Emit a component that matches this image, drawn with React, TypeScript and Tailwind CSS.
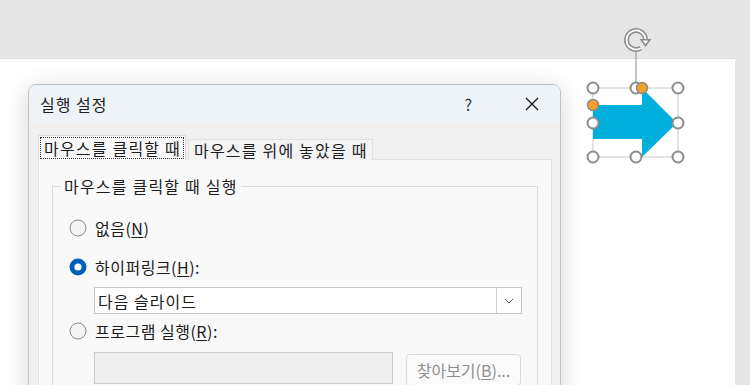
import React from "react";

const font = { fontFamily: '"Noto Sans CJK KR", "Noto Sans", sans-serif' };

function Radio({ checked }: { checked?: boolean }) {
  return (
    <svg width="18" height="18" viewBox="0 0 18 18" className="shrink-0">
      {checked ? (
        <>
          <circle cx="9" cy="9" r="8.5" fill="#005fb8" />
          <circle cx="9" cy="9" r="3.6" fill="#ffffff" />
        </>
      ) : (
        <circle cx="9" cy="9" r="8" fill="#f5f5f5" stroke="#8a8a8a" strokeWidth="1" />
      )}
    </svg>
  );
}

function Shape() {
  const handles: [number, number][] = [
    [13, 58], [56, 58], [98, 58], [13, 93], [98, 93], [13, 127], [56, 127], [98, 127],
  ];
  const arc = "M60.75 18.2 A9.5 9.5 0 1 1 65.5 10";
  return (
    <svg width="110" height="140" viewBox="0 0 110 140" className="absolute left-[580px] top-[30px] overflow-visible">
      <line x1="56" y1="22" x2="56" y2="58" stroke="#8c8c8c" strokeWidth="1" />
      <rect x="13" y="58" width="85" height="69" fill="none" stroke="#c8c8c8" strokeWidth="1" />
      <polygon points="13,75 62,75 62,58 97,93 62,127 62,109 13,109" fill="#00afdb" />
      <path d={arc} fill="none" stroke="#8c8c8c" strokeWidth="5" />
      <path d={arc} fill="none" stroke="#ffffff" strokeWidth="1.8" />
      <polygon points="59.5,9 71.5,9 65.5,17" fill="#8c8c8c" />
      <polygon points="62.5,10.5 68.5,10.5 65.5,14" fill="#ffffff" />
      {handles.map(([x, y], i) => (
        <circle key={i} cx={x} cy={y} r="5.5" fill="#ffffff" stroke="#8c8c8c" strokeWidth="2" />
      ))}
      <circle cx="62" cy="58" r="5.5" fill="#f2a027" stroke="#8c8c8c" strokeWidth="1.5" />
      <circle cx="13" cy="75" r="5.5" fill="#f2a027" stroke="#8c8c8c" strokeWidth="1.5" />
    </svg>
  );
}

export default function App() {
  return (
    <div className="relative w-[750px] h-[385px] overflow-hidden bg-[#e6e6e6]" style={font}>
      <div className="absolute left-0 top-[58px] w-[735px] h-[327px] bg-white border-t border-[#dedede]" />
      <Shape />
      <div className="absolute left-[28px] top-[84px] w-[533px] h-[320px] rounded-t-[8px] border border-[#c2c2c2] bg-[#f0f0f0] shadow-[0_4px_24px_rgba(0,0,0,0.16)] overflow-hidden text-[#1b1b1b]">
        <div className="h-[37px] bg-[#eef3f7] flex items-center pl-[11px] pr-[13px]">
          <span className="text-[16px] leading-none tracking-[1px]">실행 설정</span>
          <span className="ml-auto mr-[52px] text-[16px] leading-none text-[#333]">?</span>
          <svg width="16" height="16" viewBox="0 0 16 16" className="mr-[7px]">
            <path d="M2 2 L14 14 M14 2 L2 14" stroke="#1b1b1b" strokeWidth="1.3" />
          </svg>
        </div>
        <div className="pl-[9px] pr-[8px] pt-[13px]">
          <div className="flex items-end text-[16px] leading-none tracking-[1.2px] relative z-10 -mb-px">
            <div className="w-[148px] h-[25px] bg-[#f9f9f9] border border-b-0 border-[#dcdcdc] px-[1px] pt-[1px]">
              <div className="h-[22px] border border-dotted border-[#333] flex items-center pl-[3px] whitespace-nowrap">
                마우스를 클릭할 때
              </div>
            </div>
            <div className="ml-[2px] w-[185px] h-[21px] bg-[#f3f3f3] border border-b-0 border-[#e0e0e0] flex items-center pl-[5px] whitespace-nowrap">
              마우스를 위에 놓았을 때
            </div>
          </div>
          <div className="w-[514px] h-[240px] bg-[#f9f9f9] border border-[#e2e2e2] px-[13px] pt-[26px]">
            <div className="relative h-[220px] border border-[#dcdcdc] border-b-0 pt-[31px] pl-[16px] text-[16px] leading-none tracking-[0.5px]">
              <div className="absolute left-[8px] top-[-9px] bg-[#f9f9f9] px-[3px] leading-[17px] tracking-[1.2px] whitespace-nowrap">
                마우스를 클릭할 때 실행
              </div>
              <div className="h-[20px] flex items-center gap-[8px]">
                <Radio />
                <span>
                  없음(<span className="underline underline-offset-2">N</span>)
                </span>
              </div>
              <div className="mt-[19px] h-[20px] flex items-center gap-[8px]">
                <Radio checked />
                <span>
                  하이퍼링크(<span className="underline underline-offset-2">H</span>):
                </span>
              </div>
              <div className="mt-[10px] ml-[25px] w-[428px] h-[27px] bg-white border border-[#c8c8c8] flex items-center">
                <span className="pl-[3px] tracking-[1px]">다음 슬라이드</span>
                <div className="ml-auto h-full w-[25px] border-l border-[#cfcfcf] flex items-center justify-center">
                  <svg width="10" height="6" viewBox="0 0 10 6">
                    <path d="M1 1 L5 5 L9 1" fill="none" stroke="#555" strokeWidth="1" />
                  </svg>
                </div>
              </div>
              <div className="mt-[7px] h-[20px] flex items-center gap-[8px]">
                <Radio />
                <span>
                  프로그램 실행(<span className="underline underline-offset-2">R</span>):
                </span>
              </div>
              <div className="mt-[11px] ml-[25px] flex items-start">
                <div className="w-[299px] h-[32px] bg-[#efefef] border border-[#cccccc]" />
                <div className="ml-[13px] mt-[2px] w-[115px] h-[32px] rounded-[4px] border border-[#dadada] bg-[#fbfbfb] flex items-center justify-center text-[#8f8f8f] tracking-[0px]">
                  찾아보기(<span className="underline underline-offset-2">B</span>)...
                </div>
              </div>
            </div>
          </div>
        </div>
      </div>
    </div>
  );
}
